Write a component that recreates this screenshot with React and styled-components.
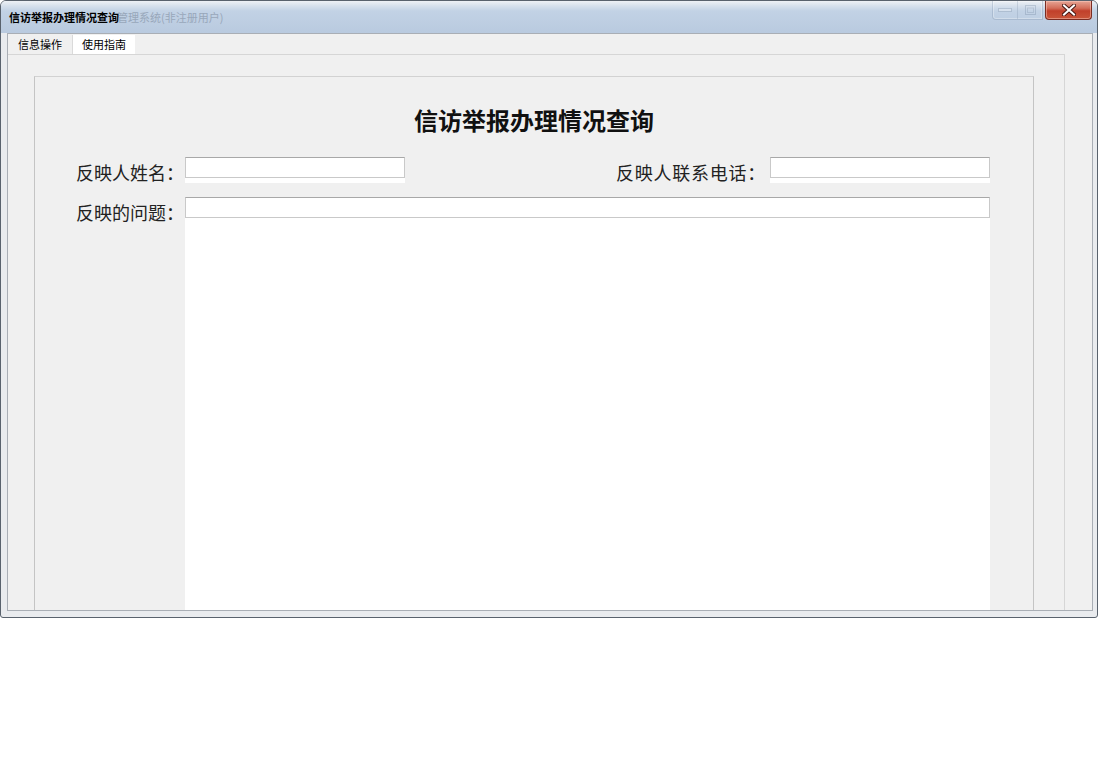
import React from 'react';
import styled, { createGlobalStyle } from 'styled-components';

const Global = createGlobalStyle`
  html, body { margin: 0; padding: 0; background: #fff; }
  body { font-family: "Noto Sans CJK SC", "Noto Sans", sans-serif; }
  * { box-sizing: border-box; }
`;

const Window = styled.div`
  width: 1098px;
  height: 618px;
  border: 1px solid #59626d;
  border-radius: 6px 6px 3px 3px;
  background: #e9ebee;
  display: flex;
  flex-direction: column;
  overflow: hidden;
`;

const TitleBar = styled.div`
  height: 32px;
  flex: none;
  display: flex;
  justify-content: space-between;
  align-items: flex-start;
  padding-left: 8px;
  background: linear-gradient(180deg, #eef1f5 0px, #d6e0ec 5px, #c2d2e5 10px, #b9cadf 100%);
`;

const TitleText = styled.div`
  margin-top: 9px;
  font-size: 11px;
  line-height: 14px;
  white-space: nowrap;
  display: flex;
`;

const TitleStrong = styled.span`
  font-weight: bold;
  color: #000;
  position: relative;
  z-index: 1;
`;

const TitleFaded = styled.span`
  color: #98a7ba;
  margin-left: -2px;
`;

const Controls = styled.div`
  display: flex;
  gap: 2px;
  margin-right: 5px;
`;

const GhostGroup = styled.div`
  width: 51px;
  height: 19px;
  display: flex;
  border: 1px solid rgba(120, 140, 165, 0.3);
  border-top: none;
  border-radius: 0 0 0 4px;
  box-shadow: inset 0 0 0 1px rgba(255, 255, 255, 0.3);
`;

const GhostButton = styled.div`
  flex: 1;
  display: flex;
  align-items: center;
  justify-content: center;
  border-right: ${p => (p.$divider ? '1px solid rgba(120,140,165,0.25)' : 'none')};
`;

const CloseButton = styled.div`
  width: 47px;
  height: 19px;
  display: flex;
  align-items: center;
  justify-content: center;
  border: 1px solid #7a2c22;
  border-top: none;
  border-radius: 0 0 4px 4px;
  background: linear-gradient(180deg, #e7a595 0%, #d36d59 40%, #c1402b 55%, #c95539 100%);
  box-shadow: inset 0 0 0 1px rgba(255, 210, 200, 0.45);
`;

const Client = styled.div`
  height: 578px;
  flex: none;
  margin: 0 4px 0 6px;
  border: 1px solid #a9aeb5;
  background: #f0f0f0;
  overflow: hidden;
  display: flex;
  flex-direction: column;
`;

const TabStrip = styled.div`
  height: 20px;
  flex: none;
  padding-top: 1px;
  display: flex;
`;

const Tab = styled.div`
  height: 19px;
  padding: 0 ${p => (p.$active ? 9 : 10)}px;
  font-size: 11px;
  line-height: 19px;
  color: #000;
  background: ${p => (p.$active ? '#fff' : '#f0f0f0')};
  border-right: ${p => (p.$active ? 'none' : '1px solid #dadada')};
`;

const Pane = styled.div`
  flex: 1;
  margin-right: 27px;
  border-top: 1px solid #d6d6d6;
  border-right: 1px solid #d6d6d6;
  padding: 21px 30px 0 26px;
  display: flex;
  flex-direction: column;
`;

const Panel = styled.div`
  height: 620px;
  flex: none;
  border: 1px solid #c4c4c4;
  border-top-color: #d2d2d2;
  border-bottom: none;
  background: #f0f0f0;
  display: flex;
  flex-direction: column;
`;

const Heading = styled.h1`
  margin: 27px 0 0;
  text-align: center;
  font-size: 24px;
  line-height: 32px;
  font-weight: bold;
  color: #111;
`;

const Form = styled.div`
  padding: 21px 43px 0 41px;
  display: flex;
  flex-direction: column;
  gap: 12px;
`;

const Row = styled.div`
  display: flex;
  align-items: flex-start;
  justify-content: space-between;
`;

const Group = styled.div`
  display: flex;
  align-items: flex-start;
  flex: ${p => (p.$grow ? 1 : 'none')};
`;

const Label = styled.div`
  font-size: 18px;
  line-height: 26px;
  padding-top: 2px;
  color: #222;
  white-space: nowrap;
  letter-spacing: ${p => p.$spacing || 0}px;
  margin-right: ${p => p.$gap || 1}px;
`;

const Field = styled.div`
  width: ${p => (p.$wide ? 'auto' : '220px')};
  flex: ${p => (p.$wide ? 1 : 'none')};
  height: ${p => p.$height}px;
  background: #fff;
`;

const FieldBox = styled.div`
  height: 21px;
  border: 1px solid #c9c9c9;
  border-top-color: #a8a8a8;
  background: #fff;
`;

export default function App() {
  return (
    <>
      <Global />
      <Window>
        <TitleBar>
          <TitleText>
            <TitleStrong>信访举报办理情况查询</TitleStrong>
            <TitleFaded>管理系统(非注册用户)</TitleFaded>
          </TitleText>
          <Controls>
            <GhostGroup>
              <GhostButton $divider>
                <svg width="14" height="4" viewBox="0 0 14 4">
                  <rect x="0.5" y="0.5" width="13" height="3" fill="rgba(255,255,255,0.3)" stroke="rgba(110,130,155,0.3)" />
                </svg>
              </GhostButton>
              <GhostButton>
                <svg width="11" height="10" viewBox="0 0 11 10">
                  <rect x="0.5" y="0.5" width="10" height="9" fill="none" stroke="rgba(110,130,155,0.3)" />
                  <rect x="2.5" y="3" width="6" height="4.5" fill="none" stroke="rgba(110,130,155,0.25)" />
                </svg>
              </GhostButton>
            </GhostGroup>
            <CloseButton>
              <svg width="14" height="12" viewBox="0 0 14 12">
                <path d="M2 1.5 L12 10.5 M12 1.5 L2 10.5" stroke="#4a1a14" strokeWidth="4" strokeLinecap="square" />
                <path d="M2 1.5 L12 10.5 M12 1.5 L2 10.5" stroke="#ffffff" strokeWidth="2" strokeLinecap="square" />
              </svg>
            </CloseButton>
          </Controls>
        </TitleBar>
        <Client>
          <TabStrip>
            <Tab>信息操作</Tab>
            <Tab $active>使用指南</Tab>
          </TabStrip>
          <Pane>
            <Panel>
              <Heading>信访举报办理情况查询</Heading>
              <Form>
                <Row>
                  <Group>
                    <Label>反映人姓名：</Label>
                    <Field $height={26}>
                      <FieldBox />
                    </Field>
                  </Group>
                  <Group>
                    <Label $spacing={0.75} $gap={4}>反映人联系电话：</Label>
                    <Field $height={26}>
                      <FieldBox />
                    </Field>
                  </Group>
                </Row>
                <Row>
                  <Group $grow>
                    <Label>反映的问题：</Label>
                    <Field $wide $height={500}>
                      <FieldBox />
                    </Field>
                  </Group>
                </Row>
              </Form>
            </Panel>
          </Pane>
        </Client>
      </Window>
    </>
  );
}
